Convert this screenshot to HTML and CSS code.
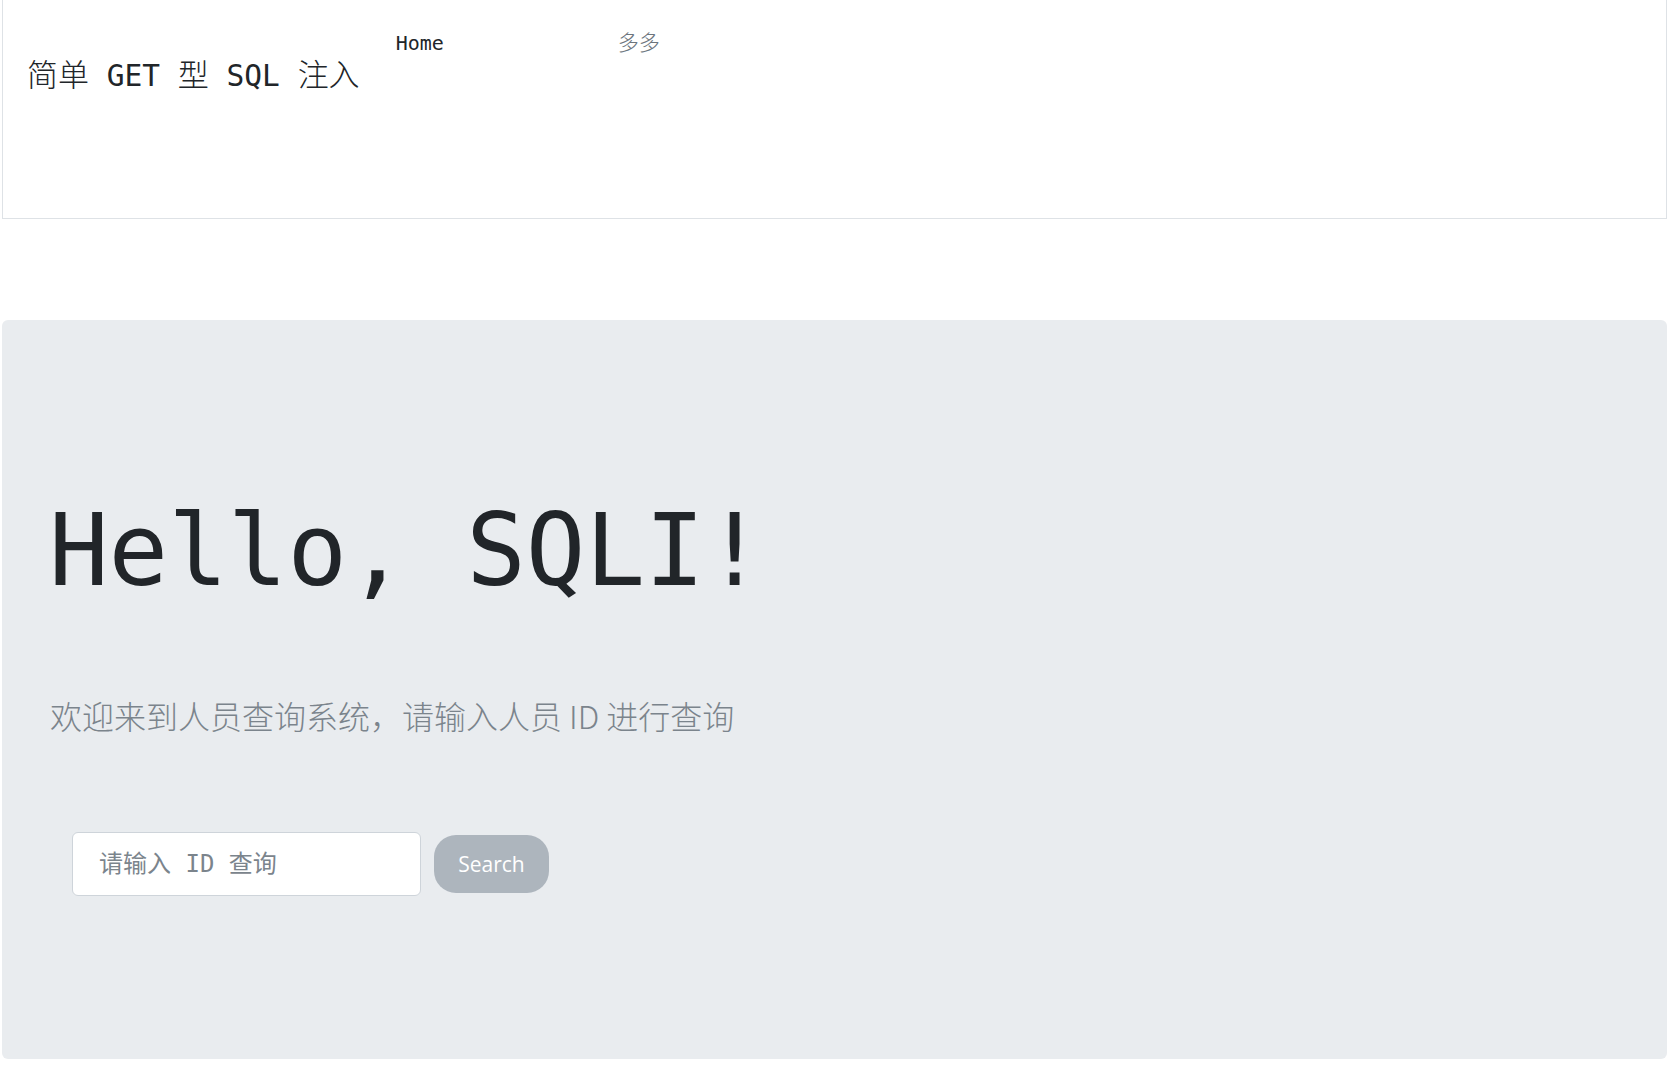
FILE: index.html
```html
<!DOCTYPE html>
<html lang="zh-CN">
<head>
<meta charset="utf-8">
<title>简单 GET 型 SQL 注入</title>
<link rel="stylesheet" href="styles.css">
</head>
<body>
<header class="navbar">
  <a class="brand" href="#"><span class="cjk">简单</span> GET <span class="cjk">型</span> SQL <span class="cjk">注入</span></a>
  <nav class="nav">
    <a class="nav-link active" href="#">Home</a>
    <a class="nav-link muted" href="#">多多</a>
  </nav>
</header>
<main class="jumbotron">
  <h1 class="display">Hello, SQLI!</h1>
  <p class="lead">欢迎来到人员查询系统，请输入人员 ID 进行查询</p>
  <form class="search-form" onsubmit="return false">
    <input class="search-input" type="text" placeholder="请输入 ID 查询">
    <button class="search-btn" type="submit">Search</button>
  </form>
</main>
</body>
</html>
```

FILE: styles.css
```css
* { box-sizing: border-box; }

html, body {
  margin: 0;
  padding: 0;
  background: #ffffff;
}

body {
  font-family: "DejaVu Sans Mono", "Noto Sans CJK SC", monospace;
  color: #212529;
}

a { text-decoration: none; }

.navbar {
  margin: 0 2px;
  height: 219px;
  border: 1px solid #dee2e6;
  border-top: none;
  padding: 28px 0 0 24px;
  display: flex;
  align-items: flex-start;
}

.brand {
  font-size: 29.5px;
  line-height: 34px;
  margin-top: 28px;
  color: #212529;
  white-space: nowrap;
}

.brand .cjk {
  font-family: "Noto Sans CJK SC", sans-serif;
  font-size: 31px;
  font-weight: 300;
  line-height: 34px;
}

.nav {
  display: flex;
  margin-left: 36px;
}

.nav-link {
  font-size: 20px;
  line-height: 30px;
}

.nav-link.active { color: #212529; }

.nav-link.muted {
  color: #6c757d;
  margin-left: 174px;
  font-family: "Noto Sans CJK SC", sans-serif;
  font-size: 21px;
  font-weight: 300;
  position: relative;
  top: -2px;
}

.jumbotron {
  margin: 101px 2px 0;
  height: 739px;
  background: #e9ecef;
  border-radius: 6px;
  padding: 172px 0 0 0;
}

.display {
  margin: 0 0 0 47px;
  font-size: 99px;
  line-height: 1.2;
  font-weight: 300;
  color: #212529;
}

.lead {
  margin: 80px 0 0 48px;
  font-family: "Noto Sans CJK SC", sans-serif;
  font-size: 32px;
  line-height: 1.5;
  font-weight: 300;
  color: #7b848c;
}

.search-form {
  display: flex;
  align-items: center;
  margin: 93px 0 0 70px;
}

.search-input {
  width: 349px;
  height: 64px;
  border: 1px solid #ced4da;
  border-radius: 6px;
  background: #ffffff;
  padding: 0 0 0 26px;
  font-family: "DejaVu Sans Mono", "Noto Sans CJK SC", monospace;
  font-size: 24px;
  color: #495057;
  outline: none;
}

.search-input::placeholder {
  color: #7b848c;
  opacity: 1;
}

.search-btn {
  margin-left: 13px;
  width: 115px;
  height: 58px;
  border: none;
  border-radius: 22px;
  background: #adb5bd;
  color: #ffffff;
  font-family: "Open Sans", sans-serif;
  font-size: 21px;
  font-stretch: 88%;
  padding: 0;
}
```
